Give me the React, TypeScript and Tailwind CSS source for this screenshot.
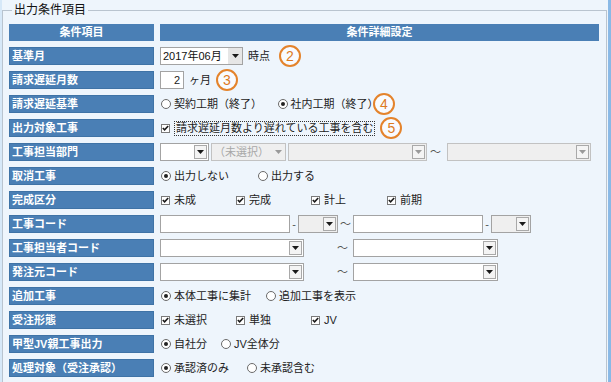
import {ReactNode} from "react";
import clsx from "clsx";

const FONT = "font-['Liberation_Sans','Noto_Sans_CJK_JP',sans-serif]";

function Arrow({gray}: {gray?: boolean}) {
    return (
        <svg width="7" height="4" viewBox="0 0 7 4">
            <path d="M0 0h7L3.5 4z" fill={gray ? "#9a9a9a" : "#1a1a1a"}/>
        </svg>
    );
}

interface DropProps {
    className: string
    text?: string
    disabled?: boolean
    flatButton?: boolean
    grayArrow?: boolean
}

function Drop({className, text, disabled, flatButton, grayArrow}: DropProps) {
    return (
        <div className={clsx("flex h-[18px] shrink-0 items-stretch border",
            disabled ? "border-[#c2c2c2] bg-[#efefef]" : "border-[#a3a3a3] bg-white", className)}>
            <div className={clsx("flex-1 truncate pl-[2px] leading-[16px]", disabled ? "text-[#a8a8a8]" : "text-[#111]")}>{text}</div>
            {flatButton ?
                <div className={clsx("flex w-[14px] items-center justify-center", disabled ? "" : "bg-[#e6e6e6]")}>
                    <Arrow gray={grayArrow}/>
                </div> :
                <div className="m-[1px] flex w-[13px] items-center justify-center border border-[#a9a9a9] bg-[#f4f4f4]">
                    <Arrow gray={grayArrow}/>
                </div>
            }
        </div>
    );
}

function TextBox({className, text}: {className: string, text?: string}) {
    return (
        <div className={clsx("h-[18px] shrink-0 border border-[#a3a3a3] bg-white pr-[3px] text-right leading-[16px]", className)}>{text}</div>
    );
}

function Radio({checked, label, className}: {checked?: boolean, label: string, className: string}) {
    return (
        <div className={clsx("flex shrink-0 items-center", className)}>
            <span className="mr-[3px] flex h-[10px] w-[10px] items-center justify-center rounded-full border border-[#6a6a6a] bg-white">
                {checked && <span className="h-[4px] w-[4px] rounded-full bg-[#222]"/>}
            </span>
            <span>{label}</span>
        </div>
    );
}

function Check({label, className, focus}: {label: string, className?: string, focus?: boolean}) {
    return (
        <div className={clsx("flex shrink-0 items-center", className)}>
            <span className="mr-[4px] flex h-[9px] w-[9px] items-center justify-center border border-[#7a7a7a] bg-white">
                <svg width="7" height="6" viewBox="0 0 7 6">
                    <path d="M0.8 3l1.8 1.8L6.2 1" fill="none" stroke="#1a1a1a" strokeWidth="1.6"/>
                </svg>
            </span>
            <span className={clsx(focus && "border border-dotted border-[#333] px-[1px] leading-[13px]")}>{label}</span>
        </div>
    );
}

function Num({n, className}: {n: string, className?: string}) {
    return (
        <span className={clsx("flex h-[22px] w-[22px] shrink-0 items-center justify-center rounded-full border-2 border-[#e4832b] bg-[#f8fbff] text-[14px] text-[#dd7a1e]", className)}>
            {n}
        </span>
    );
}

const Tilde = ({className}: {className: string}) => <span className={clsx("shrink-0 text-[#555]", className)}>～</span>;
const Dash = ({className}: {className: string}) => <span className={clsx("shrink-0 text-center text-[#555]", className)}>-</span>;

const rows: {label: string, content: ReactNode}[] = [
    {label: "基準月", content: <>
        <Drop className="w-[83px]" text="2017年06月" flatButton/>
        <span className="ml-[5px]">時点</span>
        <Num n="2" className="ml-[9px]"/>
    </>},
    {label: "請求遅延月数", content: <>
        <TextBox className="w-[24px]" text="2"/>
        <span className="ml-[5px]">ヶ月</span>
        <Num n="3" className="ml-[5px]"/>
    </>},
    {label: "請求遅延基準", content: <>
        <Radio className="ml-[1px] w-[117px]" label="契約工期（終了）"/>
        <Radio checked className="w-[95px]" label="社内工期（終了）"/>
        <Num n="4"/>
    </>},
    {label: "出力対象工事", content: <>
        <Check className="ml-[1px]" focus label="請求遅延月数より遅れている工事を含む"/>
        <Num n="5" className="ml-[5px]"/>
    </>},
    {label: "工事担当部門", content: <>
        <Drop className="w-[49px]"/>
        <Drop className="ml-[2px] w-[75px]" text="（未選択）" disabled flatButton grayArrow/>
        <Drop className="ml-[2px] w-[139px]" disabled grayArrow/>
        <Tilde className="mx-[3px] w-[14px]"/>
        <Drop className="w-[144px]" disabled grayArrow/>
    </>},
    {label: "取消工事", content: <>
        <Radio checked className="ml-[1px] w-[97px]" label="出力しない"/>
        <Radio className="" label="出力する"/>
    </>},
    {label: "完成区分", content: <>
        <Check className="ml-[1px] w-[75px]" label="未成"/>
        <Check className="w-[75px]" label="完成"/>
        <Check className="w-[76px]" label="計上"/>
        <Check label="前期"/>
    </>},
    {label: "工事コード", content: <>
        <TextBox className="w-[130px]"/>
        <Dash className="w-[8px]"/>
        <Drop className="w-[40px] !bg-[#efefef]"/>
        <Tilde className="ml-[2px] w-[13px]"/>
        <TextBox className="w-[130px]"/>
        <Dash className="w-[8px]"/>
        <Drop className="w-[40px] !bg-[#efefef]"/>
    </>},
    {label: "工事担当者コード", content: <>
        <Drop className="w-[144px]"/>
        <Tilde className="ml-[33px] mr-[2px] w-[14px]"/>
        <Drop className="w-[145px]"/>
    </>},
    {label: "発注元コード", content: <>
        <Drop className="w-[144px]"/>
        <Tilde className="ml-[33px] mr-[2px] w-[14px]"/>
        <Drop className="w-[145px]"/>
    </>},
    {label: "追加工事", content: <>
        <Radio checked className="ml-[1px] w-[105px]" label="本体工事に集計"/>
        <Radio className="" label="追加工事を表示"/>
    </>},
    {label: "受注形態", content: <>
        <Check className="ml-[1px] w-[75px]" label="未選択"/>
        <Check className="w-[75px]" label="単独"/>
        <Check label="JV"/>
    </>},
    {label: "甲型JV親工事出力", content: <>
        <Radio checked className="ml-[1px] w-[60px]" label="自社分"/>
        <Radio className="" label="JV全体分"/>
    </>},
    {label: "処理対象（受注承認）", content: <>
        <Radio checked className="ml-[1px] w-[86px]" label="承認済のみ"/>
        <Radio className="" label="未承認含む"/>
    </>},
];

export default function App() {
    return (
        <div className={clsx("h-[382px] w-[611px] overflow-hidden border-r-[3px] border-l-2 border-r-[#8ab9e6] border-l-[#d6e8f8] bg-[#eef5fc] text-[11px] text-[#222]", FONT)}>
            <fieldset className="mt-[2px] mr-[1px] h-[400px] border border-[#b9c4cf] pt-[6px] pr-[7px] pl-[6px]">
                <legend className="ml-[3px] px-[2px] text-[12px] leading-[16px] text-[#111]">出力条件項目</legend>
                <div className="flex flex-col gap-[6px]">
                    <div className="flex h-[17px] gap-[6px] text-[11px] font-bold text-white">
                        <div className="flex w-[145px] items-center justify-center bg-[#4a7fb5]">条件項目</div>
                        <div className="flex flex-1 items-center justify-center bg-[#4a7fb5]">条件詳細設定</div>
                    </div>
                    {rows.map(row => (
                        <div key={row.label} className="flex h-[18px] gap-[6px]">
                            <div className="flex w-[145px] shrink-0 items-center border border-[#3f73a6] bg-[#4a7fb5] pl-[2px] font-bold text-white">{row.label}</div>
                            <div className="flex flex-1 items-center leading-[18px]">{row.content}</div>
                        </div>
                    ))}
                </div>
            </fieldset>
        </div>
    );
}
